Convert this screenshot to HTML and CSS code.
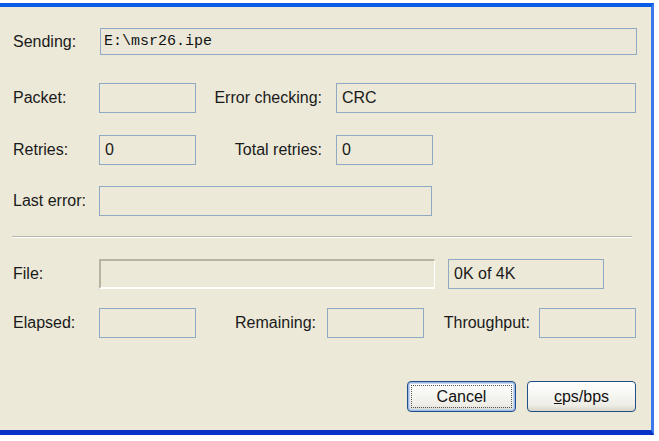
FILE: index.html
```html
<!DOCTYPE html>
<html>
<head>
<meta charset="utf-8">
<link rel="stylesheet" href="styles.css">
</head>
<body>
<div class="window">
  <div class="row row-send">
    <span class="label">Sending:</span>
    <div class="field field-send mono">E:\msr26.ipe</div>
  </div>
  <div class="row row-2">
    <span class="label">Packet:</span>
    <div class="field w97"></div>
    <span class="label-r w140">Error checking:</span>
    <div class="field w300">CRC</div>
  </div>
  <div class="row row-3">
    <span class="label">Retries:</span>
    <div class="field w97">0</div>
    <span class="label-r w140">Total retries:</span>
    <div class="field w97">0</div>
  </div>
  <div class="row row-4">
    <span class="label">Last error:</span>
    <div class="field w333"></div>
  </div>
  <div class="separator"></div>
  <div class="row row-5">
    <span class="label">File:</span>
    <div class="progress"></div>
    <div class="field w156">0K of 4K</div>
  </div>
  <div class="row row-6">
    <span class="label">Elapsed:</span>
    <div class="field w97"></div>
    <span class="label-r w131">Remaining:</span>
    <div class="field w97"></div>
    <span class="label-r w115">Throughput:</span>
    <div class="field w97"></div>
  </div>
  <div class="buttons">
    <button class="btn btn-default"><span class="focus">Cancel</span></button>
    <button class="btn"><span><u>c</u>ps/bps</span></button>
  </div>
</div>
</body>
</html>
```
FILE: styles.css
```css
html, body {
  margin: 0;
  padding: 0;
  background: #ffffff;
}
body {
  padding-top: 3px;
  width: 659px;
  height: 441px;
  box-sizing: border-box;
  font-family: "Liberation Sans", Arial, sans-serif;
  font-size: 16px;
  color: #1a1a1a;
}
.window {
  width: 654px;
  height: 432px;
  box-sizing: border-box;
  background: #ECE9D8;
  border-top: 4px solid #0a5ae8;
  border-right: 3px solid #3b78ec;
  border-bottom: 5px solid #0832c8;
  box-shadow: inset 0 -1px 0 #ECE9D8;
  padding: 0 15px 0 13px;
  display: flex;
  flex-direction: column;
}
.row {
  display: flex;
  align-items: center;
  height: 30px;
}
.label {
  width: 86px;
  flex: none;
}
.label-r {
  flex: none;
  text-align: right;
  box-sizing: border-box;
}
.w140 { width: 140px; padding-right: 14px; }
.w131 { width: 131px; padding-right: 11px; }
.w115 { width: 115px; padding-right: 9px; }
.field {
  flex: none;
  height: 30px;
  box-sizing: border-box;
  border: 1px solid #91aac3;
  padding-left: 5px;
  display: flex;
  align-items: center;
  background: #ECE9D8;
  white-space: nowrap;
}
.w97 { width: 97px; }
.w300 { width: 300px; }
.w333 { width: 333px; }
.w156 { width: 156px; margin-left: 13px; }
.row-send {
  margin-top: 21px;
  height: 27px;
}
.field-send {
  width: 537px;
  height: 27px;
  margin-left: 1px;
  padding-left: 3px;
  background: #EBE8D9;
}
.mono {
  font-family: "Liberation Mono", "DejaVu Sans Mono", monospace;
  font-size: 15px;
  color: #111;
}
.row-2 { margin-top: 28px; }
.row-3 { margin-top: 22px; }
.row-4 { margin-top: 21px; }
.separator {
  margin-top: 20px;
  margin-left: -1px;
  width: 620px;
  height: 1px;
  background: #b8b5a6;
  border-bottom: 1px solid #ffffff;
}
.row-5 { margin-top: 21px; }
.progress {
  flex: none;
  width: 336px;
  height: 30px;
  box-sizing: border-box;
  border-top: 2px solid #b7b3a3;
  border-left: 2px solid #b7b3a3;
  border-bottom: 2px solid #ffffff;
  border-right: 1px solid #ffffff;
}
.row-6 { margin-top: 19px; }
.buttons {
  margin-top: 43px;
  display: flex;
  justify-content: flex-end;
  gap: 11px;
}
.btn {
  width: 109px;
  height: 31px;
  box-sizing: border-box;
  border: 1px solid #1f4f85;
  border-radius: 4px;
  background: linear-gradient(#ffffff 0%, #f7f7f3 40%, #eeede6 80%, #d9d5c8 100%);
  font-family: "Liberation Sans", Arial, sans-serif;
  font-size: 16px;
  color: #111;
  padding: 0;
  display: flex;
  align-items: center;
  justify-content: center;
}
.btn-default {
  box-shadow: inset 0 0 0 1px #9eb9e6, inset 0 0 0 2px #c6d6f2;
}
.focus {
  display: flex;
  align-items: center;
  justify-content: center;
  width: 99px;
  height: 21px;
  border: 1px dotted #555;
}
```
